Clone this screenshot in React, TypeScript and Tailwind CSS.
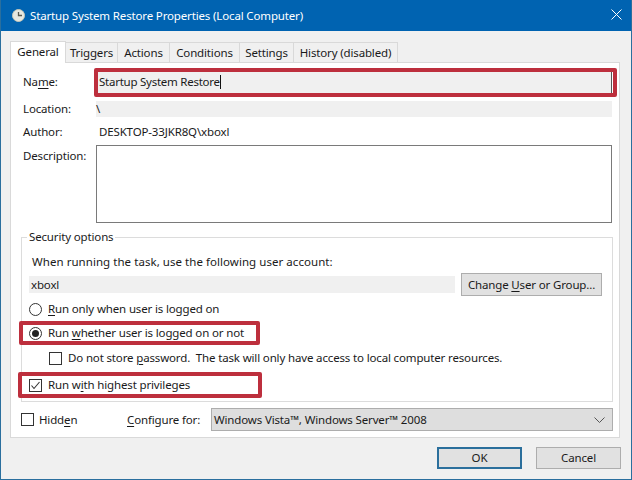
const U = ({ children }: { children: string }) => <span className="underline underline-offset-2 decoration-1">{children}</span>;

const Redbox = ({ className }: { className: string }) => (
  <div className={`absolute border-[4px] border-[#bd2f3d] rounded-[2px] pointer-events-none ${className}`} />
);

const Box = ({ checked }: { checked?: boolean }) => (
  <svg width="13" height="13" viewBox="0 0 13 13" className="shrink-0">
    <rect x="0.5" y="0.5" width="12" height="12" fill="#fff" stroke="#333" />
    {checked && <path d="M2.5 6.5 L5 9.5 L10.5 3" fill="none" stroke="#333" strokeWidth="1.1" />}
  </svg>
);

const Radio = ({ on }: { on?: boolean }) => (
  <svg width="13" height="13" viewBox="0 0 13 13" className="shrink-0">
    <circle cx="6.5" cy="6.5" r="6" fill="#fff" stroke="#333" />
    {on && <circle cx="6.5" cy="6.5" r="3.5" fill="#222" />}
  </svg>
);

const tabs = [
  { t: "Triggers", w: "w-[52px]" },
  { t: "Actions", w: "w-[52px]" },
  { t: "Conditions", w: "w-[70px]" },
  { t: "Settings", w: "w-[54px]" },
  { t: "History (disabled)", w: "w-[104px]" },
];

export default function App() {
  return (
    <div
      className="relative w-[632px] h-[480px] overflow-hidden flex flex-col bg-[#f0f0f0] border border-t-0 border-[#2a6f9e] text-[11.5px] tracking-[-0.15px] leading-[16px] text-[#1a1a1a]"
      style={{ fontFamily: '"Noto Sans", "Open Sans", sans-serif' }}
    >
      <div className="h-[31px] shrink-0 -mx-px bg-[#0063b1] flex items-center pl-[12px] pr-[10px] text-white">
        <svg width="13" height="13" viewBox="0 0 13 13" className="shrink-0">
          <circle cx="6.5" cy="6.5" r="6" fill="#e8e8e0" stroke="#c9c9b8" />
          <path d="M6.5 3V6.5H10" fill="none" stroke="#5a5a50" strokeWidth="1.3" />
        </svg>
        <span className="ml-[5px]">Startup System Restore Properties (Local Computer)</span>
        <svg width="11" height="11" viewBox="0 0 11 11" className="ml-auto -mt-[2px]">
          <path d="M0.5 0.5L10.5 10.5M10.5 0.5L0.5 10.5" stroke="#fff" strokeWidth="1" />
        </svg>
      </div>

      <div className="flex items-end h-[31px] pl-[9px] shrink-0 relative z-10">
        <div className="h-[22px] w-[56px] bg-white border border-b-0 border-[#d9d9d9] flex items-center justify-center -mb-px pb-[2px]">General</div>
        {tabs.map(({ t, w }) => (
          <div
            key={t}
            className={`h-[20px] bg-[#f0f0f0] border border-l-0 border-b-0 border-[#d9d9d9] flex items-center justify-center whitespace-nowrap ${w}`}
          >
            {t}
          </div>
        ))}
      </div>

      <div className="relative ml-[9px] w-[610px] h-[376px] bg-white border border-[#d9d9d9] pl-[12px] shrink-0">
        <div className="flex items-center h-[22px] mt-[8px]">
          <span className="w-[73px]">Na<U>m</U>e:</span>
          <div className="w-[516px] h-[22px] bg-[#f0f0f0] border-r border-[#555] flex items-center pl-[3px] tracking-[-0.25px]">
            <span>Startup System Restore</span>
            <span className="w-px h-[14px] bg-[#111]" />
          </div>
        </div>
        <div className="flex items-center h-[18px] mt-[7px]">
          <span className="w-[73px]">Location:</span>
          <div className="w-[516px] h-[16px] bg-[#f0f0f0]">\</div>
        </div>
        <div className="flex items-center h-[18px] mt-[5px]">
          <span className="w-[73px]">Author:</span>
          <span className="pl-[3px]">DESKTOP-33JKR8Q\xboxl</span>
        </div>
        <div className="flex items-start mt-[4px]">
          <span className="w-[73px] mt-[3px]">Description:</span>
          <div className="w-[516px] h-[78px] bg-white border border-[#7a7a7a]" />
        </div>

        <div className="relative -ml-[2px] w-[592px] h-[165px] border border-[#dcdcdc] mt-[14px] pl-[7px]">
          <span className="absolute -top-[9px] left-[5px] bg-white px-[2px]">Security options</span>
          <div className="h-[16px] mt-[16px] pl-[3px] tracking-[0.05px]">When running the task, use the following user account:</div>
          <div className="flex items-center mt-[3px] h-[23px]">
            <div className="w-[426px] h-[17px] bg-[#f0f0f0] pl-[2px] flex items-center">xboxl</div>
            <button className="ml-[6px] w-[141px] h-[23px] bg-[#e1e1e1] border border-[#adadad] flex items-center justify-center">
              <span>Change <U>U</U>ser or Group...</span>
            </button>
          </div>
          <div className="flex items-center gap-[6px] mt-[5px] h-[16px]">
            <Radio />
            <span>
              <U>R</U>un only when user is logged on
            </span>
          </div>
          <div className="flex items-center gap-[6px] mt-[8px] h-[16px]">
            <Radio on />
            <span>
              Run <U>w</U>hether user is logged on or not
            </span>
          </div>
          <div className="flex items-center gap-[6px] mt-[9px] h-[16px] pl-[20px]">
            <Box />
            <span className="whitespace-pre">
              Do not store <U>p</U>assword.  The task will only have access to local computer resources.
            </span>
          </div>
          <div className="flex items-center gap-[6px] mt-[11px] h-[16px]">
            <Box checked />
            <span>
              Run w<U>i</U>th highest privileges
            </span>
          </div>
        </div>

        <div className="flex items-center h-[23px] mt-[6px] -ml-[2px]">
          <Box />
          <span className="ml-[5px] w-[88px]">
            Hidd<U>e</U>n
          </span>
          <span className="w-[84px]">
            <U>C</U>onfigure for:
          </span>
          <div className="w-[402px] h-[23px] bg-[#dedede] border border-[#adadad] flex items-center pl-[2px] pr-[7px]">
            <span>Windows Vista™, Windows Server™ 2008</span>
            <svg width="11" height="6" viewBox="0 0 11 6" className="ml-auto">
              <path d="M0.5 0.5L5.5 5.5L10.5 0.5" fill="none" stroke="#555" />
            </svg>
          </div>
        </div>
      </div>

      <div className="flex justify-end gap-[14px] pr-[10px] mt-[9px]">
        <button className="w-[85px] h-[22px] bg-[#e1e1e1] border-2 border-[#2b6f9c] flex items-center justify-center">OK</button>
        <button className="w-[85px] h-[22px] bg-[#e1e1e1] border border-[#adadad] flex items-center justify-center">Cancel</button>
      </div>

      <Redbox className="left-[93px] top-[68px] w-[523px] h-[29px]" />
      <Redbox className="left-[18px] top-[321px] w-[241px] h-[24px]" />
      <Redbox className="left-[17px] top-[372px] w-[244px] h-[26px]" />
    </div>
  );
}
